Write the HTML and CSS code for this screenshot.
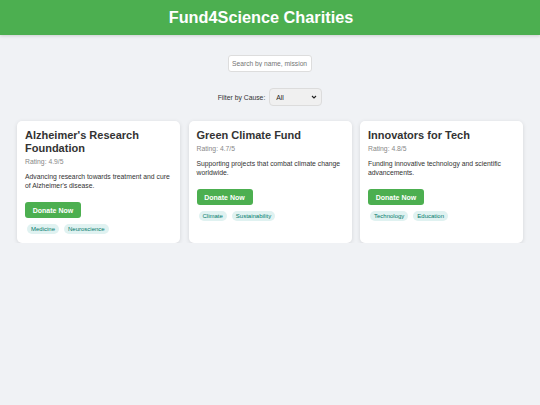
FILE: index.html
```html
<!DOCTYPE html>
<html lang="en">
<head>
  <meta charset="UTF-8" />
  <title>Fund4Science Charities</title>
  <link rel="stylesheet" href="styles.css">
</head>
<body>
  <header class="topbar">
    <h1>Fund4Science Charities</h1>
  </header>

  <div class="search">
    <input type="text" id="searchBox" placeholder="Search by name, mission">
  </div>

  <div class="filter">
    <label for="causeFilter">Filter by Cause:</label>
    <select id="causeFilter">
      <option>All</option>
      <option>Medicine</option>
      <option>Climate</option>
      <option>Technology</option>
    </select>
  </div>

  <div class="charity-list">
    <div class="card">
      <h3>Alzheimer's Research Foundation</h3>
      <p class="rating">Rating: 4.9/5</p>
      <p class="mission">Advancing research towards treatment and cure of Alzheimer's disease.</p>
      <button class="donate">Donate Now</button>
      <div class="tags">
        <span class="tag">Medicine</span>
        <span class="tag">Neuroscience</span>
      </div>
    </div>
    <div class="card">
      <h3>Green Climate Fund</h3>
      <p class="rating">Rating: 4.7/5</p>
      <p class="mission">Supporting projects that combat climate change worldwide.</p>
      <button class="donate">Donate Now</button>
      <div class="tags">
        <span class="tag">Climate</span>
        <span class="tag">Sustainability</span>
      </div>
    </div>
    <div class="card">
      <h3>Innovators for Tech</h3>
      <p class="rating">Rating: 4.8/5</p>
      <p class="mission">Funding innovative technology and scientific advancements.</p>
      <button class="donate">Donate Now</button>
      <div class="tags">
        <span class="tag">Technology</span>
        <span class="tag">Education</span>
      </div>
    </div>
  </div>
</body>
</html>
```

FILE: styles.css
```css
body {
  margin: 0;
  font-family: "Liberation Sans", Arial, sans-serif;
  background: #f0f2f5;
  color: #333;
}
.topbar {
  background: #4caf50;
  color: #fff;
  height: 35px;
  display: flex;
  align-items: center;
  justify-content: center;
  padding-right: 18px;
  box-shadow: 0 1px 3px rgba(0, 0, 0, 0.15);
}
.topbar h1 {
  margin: 0;
  font-size: 16.3px;
}
.search {
  text-align: center;
  margin-top: 17px;
}
.search input {
  width: 84px;
  height: 17px;
  box-sizing: border-box;
  padding: 0 3px;
  border: 1px solid #ddd;
  border-radius: 3px;
  font-family: inherit;
  font-size: 6.7px;
  outline: none;
}
.filter {
  display: flex;
  justify-content: center;
  align-items: center;
  gap: 4px;
  margin-top: 16px;
  font-size: 6.8px;
}
.filter select {
  -webkit-appearance: none;
  appearance: none;
  width: 53px;
  height: 18px;
  font-family: inherit;
  font-size: 6.8px;
  padding: 0 0 0 6px;
  border: 1px solid #dcdcdc;
  border-radius: 4px;
  background: #f0f0f0 url("data:image/svg+xml;utf8,<svg xmlns='http://www.w3.org/2000/svg' width='6' height='4' viewBox='0 0 6 4'><path d='M1 1l2 2 2-2' fill='none' stroke='%23222' stroke-width='1.1'/></svg>") no-repeat right 4px center;
  color: #222;
}
.charity-list {
  display: grid;
  grid-template-columns: repeat(3, 1fr);
  gap: 8.5px;
  padding: 0 17px;
  margin-top: 15px;
}
.card {
  background: #fff;
  border-radius: 5px;
  padding: 8px 8px 9px;
  box-shadow: 0 1px 4px rgba(0, 0, 0, 0.12);
}
.card h3 {
  margin: 0 0 3px;
  font-size: 11px;
  line-height: 13px;
  color: #333;
}
.rating {
  margin: 0 0 6px;
  font-size: 6.8px;
  line-height: 8px;
  color: #888;
}
.mission {
  margin: 0 0 12px;
  font-size: 6.8px;
  line-height: 9px;
  color: #333;
}
.donate {
  display: block;
  width: 56px;
  height: 16px;
  padding: 0;
  border: none;
  border-radius: 3px;
  background: #4caf50;
  color: #fff;
  font-family: inherit;
  font-size: 7px;
  font-weight: bold;
}
.tags {
  display: flex;
  gap: 5px;
  margin-top: 6px;
  padding-left: 2px;
}
.tag {
  background: #e0f2f1;
  color: #00796b;
  font-size: 6px;
  line-height: 10px;
  padding: 0 4px;
  border-radius: 5px;
}
```
